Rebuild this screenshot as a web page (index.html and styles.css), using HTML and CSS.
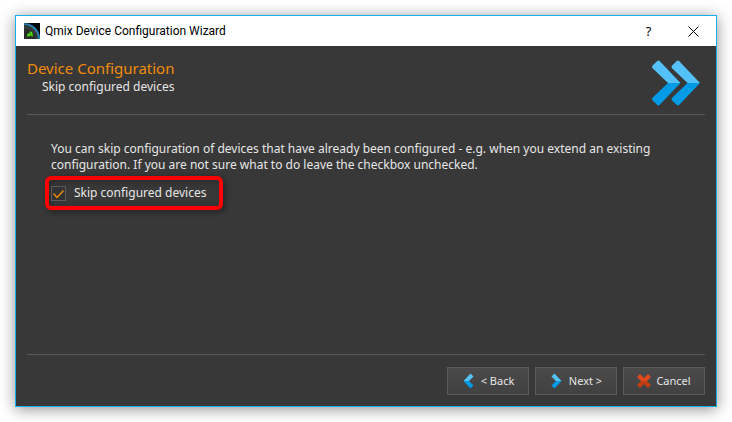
FILE: index.html
```html
<!DOCTYPE html>
<html lang="en">
<head>
<meta charset="utf-8">
<title>Qmix Device Configuration Wizard</title>
<link rel="stylesheet" href="styles.css">
</head>
<body>
<main class="window">
  <header class="titlebar">
    <svg class="app-icon" viewBox="0 0 16 16" aria-hidden="true">
      <defs>
        <linearGradient id="arc" x1="0" y1="0" x2="1" y2="1">
          <stop offset="0" stop-color="#17506b"/>
          <stop offset=".5" stop-color="#2e8fc4"/>
          <stop offset="1" stop-color="#1d75a6"/>
        </linearGradient>
      </defs>
      <rect width="16" height="16" fill="#050607"/>
      <circle cx="0" cy="16" r="16" fill="url(#arc)"/>
      <circle cx="0" cy="16" r="14" fill="#34393b"/>
      <circle cx="1" cy="17" r="11" fill="#292d2c"/>
      <path d="M3 11l2-1 1-2 2 1 1 2v3l-3-1-3 1z" fill="#3aa80f"/>
      <path d="M4 11h2v2H4zM7 9h1v3H7z" fill="#62dc22"/>
    </svg>
    <h1 class="titlebar-text">Qmix Device Configuration Wizard</h1>
    <button class="caption-button" type="button" aria-label="Help">?</button>
    <button class="caption-button" type="button" aria-label="Close">
      <svg class="close-icon" viewBox="0 0 11 11" aria-hidden="true"><path d="M.5 .5l10 10M10.500 .5l-10 10"/></svg>
    </button>
  </header>
  <form class="wizard">
    <div class="page-header">
      <div>
        <h2 class="page-title">Device Configuration</h2>
        <p class="page-subtitle">Skip configured devices</p>
      </div>
      <svg class="page-logo" viewBox="0 0 48 46" aria-hidden="true">
        <g id="chevron">
          <path d="M0.600 8.200a2 2 0 0 1 0-2.600L5 1.200a2 2 0 0 1 2.800 0L28.500 23H16z" fill="#54c1f8"/>
          <path d="M0.600 37.800a2 2 0 0 0 0 2.600L5 44.800a2 2 0 0 0 2.800 0L28.500 23H16z" fill="#039be5"/>
        </g>
        <use href="#chevron" x="19.500"/>
      </svg>
    </div>
    <div class="page-content">
      <p class="description">You can skip configuration of devices that have already been configured - e.g. when you extend an existing configuration. If you are not sure what to do leave the checkbox unchecked.</p>
      <label class="skip-option">
        <input class="checkbox" type="checkbox" checked>
        Skip configured devices
      </label>
    </div>
    <footer class="actions">
      <button class="button" type="button">
        <svg class="button-icon" viewBox="0 0 14 16" aria-hidden="true">
          <path d="M8.500 .5L11.500 3.500 7 8H1.500z" fill="#54c1f8"/>
          <path d="M8.500 15.500L11.500 12.500 7 8H1.500z" fill="#039be5"/>
        </svg>
        &lt; Back
      </button>
      <button class="button" type="button">
        <svg class="button-icon" viewBox="0 0 14 16" aria-hidden="true">
          <path d="M4.500 .5L1.500 3.500 6 8H11.500z" fill="#54c1f8"/>
          <path d="M4.500 15.500L1.500 12.500 6 8H11.500z" fill="#039be5"/>
        </svg>
        Next &gt;
      </button>
      <button class="button" type="button">
        <svg class="button-icon" viewBox="0 0 14 14" aria-hidden="true">
          <path d="M3 0L7 4 11 0 14 3 10 7H4L0 3z" fill="#dd4a1b"/>
          <path d="M4 7H10L14 11 11 14 7 10 3 14 0 11z" fill="#c33d14"/>
        </svg>
        Cancel
      </button>
    </footer>
  </form>
</main>
</body>
</html>
```
FILE: styles.css
```css
* {
  box-sizing: border-box;
}

body {
  margin: 0;
  min-height: 100vh;
  padding: 15px;
  display: flex;
  background: #fff;
  font-family: "Noto Sans", "Open Sans", sans-serif;
  font-size: 12px;
  line-height: 16px;
  color: #e6e6e6;
}

h1, h2, p {
  margin: 0;
  font-weight: 400;
}

.window {
  flex: 1;
  display: flex;
  flex-direction: column;
  border: 1px solid #18b0ea;
  background: #383838;
  box-shadow: 0 2px 14px rgba(0, 0, 0, 0.45);
}

.titlebar {
  display: flex;
  align-items: center;
  height: 30px;
  padding-left: 8px;
  background: #fff;
  color: #000;
}

.app-icon {
  width: 16px;
  height: 16px;
  margin-right: 5px;
}

.titlebar-text {
  flex: 1;
  font-family: Roboto, sans-serif;
  font-size: 12px;
}

.caption-button {
  display: flex;
  align-items: center;
  justify-content: center;
  width: 45px;
  height: 30px;
  padding: 0;
  border: 0;
  background: transparent;
  color: #000;
  font: 400 13px "Noto Sans", sans-serif;
}

.close-icon {
  width: 11px;
  height: 11px;
  stroke: #000;
  fill: none;
}

.wizard {
  flex: 1;
  display: flex;
  flex-direction: column;
  padding: 11px;
}

.page-header {
  display: flex;
  justify-content: space-between;
  height: 58px;
  padding-right: 5px;
  border-bottom: 1px solid #585858;
}

.page-title {
  font-size: 15px;
  line-height: 22px;
  color: #f08c0a;
}

.page-subtitle {
  padding-left: 15px;
}

.page-logo {
  width: 48px;
  height: 46px;
  margin-top: 3px;
}

.page-content {
  flex: 1;
  padding: 26px 18px;
  border-bottom: 1px solid #585858;
}

.description {
  padding-left: 6px;
}

.skip-option {
  display: inline-flex;
  align-items: center;
  gap: 8px;
  height: 34px;
  margin-top: 3px;
  padding: 0 13px 0 2px;
  border: 4px solid #fe0000;
  border-radius: 6px;
  box-shadow: 2px 2px 6px rgba(0, 0, 0, 0.4), inset 2px 2px 6px rgba(0, 0, 0, 0.3);
}

.checkbox {
  appearance: none;
  width: 15px;
  height: 15px;
  margin: 0;
  border: 1px solid #5c5c5c;
  background: #333;
}

.checkbox:checked {
  background: #333 url("data:image/svg+xml,%3Csvg xmlns='http://www.w3.org/2000/svg' viewBox='0 0 13 13'%3E%3Cpath d='M1.500 6.500l3.500 4 6.500-7' fill='none' stroke='%23f08c0a' stroke-width='1.400'/%3E%3C/svg%3E") center / 13px no-repeat;
}

.actions {
  display: flex;
  justify-content: flex-end;
  gap: 6px;
  padding-top: 12px;
}

.button {
  display: flex;
  align-items: center;
  justify-content: center;
  gap: 5px;
  width: 82px;
  height: 28px;
  padding: 0;
  border: 1px solid #5a5a5a;
  background: linear-gradient(#4a4a4a, #414141);
  color: #e6e6e6;
  font-family: inherit;
  font-size: 11px;
  line-height: 16px;
}

.button-icon {
  width: 14px;
  height: 16px;
}
```
